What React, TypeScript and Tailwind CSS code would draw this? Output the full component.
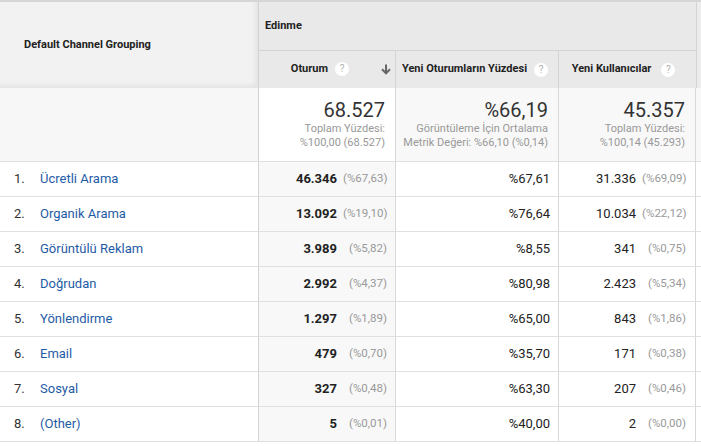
import React from "react";

type Row = {
  n: number;
  label: string;
  sessions: string;
  sessionsPct: string;
  newPct: string;
  users: string;
  usersPct: string;
};

const ROWS: Row[] = [
  { n: 1, label: "Ücretli Arama", sessions: "46.346", sessionsPct: "(%67,63)", newPct: "%67,61", users: "31.336", usersPct: "(%69,09)" },
  { n: 2, label: "Organik Arama", sessions: "13.092", sessionsPct: "(%19,10)", newPct: "%76,64", users: "10.034", usersPct: "(%22,12)" },
  { n: 3, label: "Görüntülü Reklam", sessions: "3.989", sessionsPct: "(%5,82)", newPct: "%8,55", users: "341", usersPct: "(%0,75)" },
  { n: 4, label: "Doğrudan", sessions: "2.992", sessionsPct: "(%4,37)", newPct: "%80,98", users: "2.423", usersPct: "(%5,34)" },
  { n: 5, label: "Yönlendirme", sessions: "1.297", sessionsPct: "(%1,89)", newPct: "%65,00", users: "843", usersPct: "(%1,86)" },
  { n: 6, label: "Email", sessions: "479", sessionsPct: "(%0,70)", newPct: "%35,70", users: "171", usersPct: "(%0,38)" },
  { n: 7, label: "Sosyal", sessions: "327", sessionsPct: "(%0,48)", newPct: "%63,30", users: "207", usersPct: "(%0,46)" },
  { n: 8, label: "(Other)", sessions: "5", sessionsPct: "(%0,01)", newPct: "%40,00", users: "2", usersPct: "(%0,00)" },
];

function HelpIcon() {
  return (
    <span className="inline-flex h-[14px] w-[14px] shrink-0 items-center justify-center rounded-full bg-white text-[10px] font-normal leading-none text-[#b0b0b0]">
      ?
    </span>
  );
}

function SortArrow() {
  return (
    <svg width="10" height="11" viewBox="0 0 10 11" className="shrink-0">
      <path d="M5 0.5v9" stroke="#666" strokeWidth="2" fill="none" />
      <path d="M1 5.3l4 4 4-4" stroke="#666" strokeWidth="2" fill="none" />
    </svg>
  );
}

export default function App() {
  return (
    <div className="h-[446px] w-[701px] overflow-hidden bg-white font-[Roboto,sans-serif]">
      <table className="w-[701px] table-fixed border-separate border-spacing-0">
        <colgroup>
          <col className="w-[259px]" />
          <col className="w-[137px]" />
          <col className="w-[163px]" />
          <col className="w-[137px]" />
          <col />
        </colgroup>
        <thead>
          <tr className="h-[51px]">
            <th
              rowSpan={2}
              className="border-r border-t-2 border-r-[#d2d2d2] border-t-[#d6d6d6] bg-[#f2f2f2] pl-[24px] text-left align-middle text-[11px] font-bold text-[#222] shadow-[inset_-4px_-4px_5px_-1px_rgba(0,0,0,0.06)]"
            >
              Default Channel Grouping
            </th>
            <th
              colSpan={3}
              className="border-b border-t-2 border-b-[#d4d4d4] border-t-[#d6d6d6] bg-[#e9e9e9] pl-[6px] text-left align-middle text-[11px] font-bold text-[#222]"
            >
              Edinme
            </th>
            <th rowSpan={2} className="border-l border-t-2 border-l-[#d4d4d4] border-t-[#d6d6d6] bg-[#ececec]" />
          </tr>
          <tr className="h-[37px]">
            <th className="border-r border-r-[#d4d4d4] bg-[#e9e9e9] align-middle">
              <div className="flex items-center justify-end pr-[4px] text-[11px] font-bold text-[#222]">
                <span>Oturum</span>
                <span className="ml-[7px]">
                  <HelpIcon />
                </span>
                <span className="ml-[32px]">
                  <SortArrow />
                </span>
              </div>
            </th>
            <th className="border-r border-r-[#d4d4d4] bg-[#e9e9e9] align-middle">
              <div className="flex items-center justify-center gap-[7px] pr-[4px] text-[11px] font-bold text-[#222]">
                <span>Yeni Oturumların Yüzdesi</span>
                <HelpIcon />
              </div>
            </th>
            <th className="bg-[#e9e9e9] align-middle">
              <div className="flex items-center justify-center gap-[10px] pr-[8px] text-[11px] font-bold text-[#222]">
                <span>Yeni Kullanıcılar</span>
                <HelpIcon />
              </div>
            </th>
          </tr>
        </thead>
        <tbody>
          <tr className="h-[74px]">
            <td className="border-b border-r border-b-[#e0e0e0] border-r-[#d2d2d2] bg-[#f7f7f7]" />
            <td className="border-b border-r border-b-[#e0e0e0] border-r-[#d8d8d8] bg-white pr-[10px] pt-[10px] text-right align-top">
              <div className="text-[20px] leading-[24px] text-[#333]">68.527</div>
              <div className="text-[11px] leading-[14px] text-[#999]">Toplam Yüzdesi:</div>
              <div className="text-[11px] leading-[14px] text-[#999]">%100,00 (68.527)</div>
            </td>
            <td className="border-b border-r border-b-[#e0e0e0] border-r-[#d8d8d8] bg-[#f8f8f8] pr-[10px] pt-[10px] text-right align-top">
              <div className="text-[20px] leading-[24px] text-[#333]">%66,19</div>
              <div className="whitespace-nowrap text-[11px] leading-[14px] text-[#999]">Görüntüleme İçin Ortalama</div>
              <div className="whitespace-nowrap text-[11px] leading-[14px] text-[#999]">Metrik Değeri: %66,10 (%0,14)</div>
            </td>
            <td className="border-b border-r border-b-[#e0e0e0] border-r-[#d8d8d8] bg-[#f8f8f8] pr-[10px] pt-[10px] text-right align-top">
              <div className="text-[20px] leading-[24px] text-[#333]">45.357</div>
              <div className="text-[11px] leading-[14px] text-[#999]">Toplam Yüzdesi:</div>
              <div className="text-[11px] leading-[14px] text-[#999]">%100,14 (45.293)</div>
            </td>
            <td className="border-b border-b-[#e0e0e0] bg-[#f8f8f8]" />
          </tr>
          {ROWS.map((r) => (
            <tr key={r.n} className="h-[35px]">
              <td className="border-b border-r border-b-[#e0e0e0] border-r-[#d2d2d2] align-middle text-[13px]">
                <div className="flex items-center">
                  <span className="w-[40px] pl-[14px] text-[#333]">{r.n}.</span>
                  <span className="text-[#1f5ca6]">{r.label}</span>
                </div>
              </td>
              <td className="border-b border-r border-b-[#e0e0e0] border-r-[#d8d8d8] bg-[#f8f8f8] pr-[8px] align-middle">
                <div className="flex items-center justify-end gap-[6px]">
                  <span className="text-[13px] font-bold text-[#222]">{r.sessions}</span>
                  <span className="w-[44px] text-right text-[11.5px] text-[#999]">{r.sessionsPct}</span>
                </div>
              </td>
              <td className="border-b border-r border-b-[#e0e0e0] border-r-[#d8d8d8] pr-[8px] text-right align-middle text-[13px] text-[#222]">
                {r.newPct}
              </td>
              <td className="border-b border-r border-b-[#e0e0e0] border-r-[#d8d8d8] pr-[9px] align-middle">
                <div className="flex items-center justify-end gap-[6px]">
                  <span className="text-[13px] text-[#222]">{r.users}</span>
                  <span className="w-[44px] text-right text-[11.5px] text-[#999]">{r.usersPct}</span>
                </div>
              </td>
              <td className="border-b border-b-[#e0e0e0]" />
            </tr>
          ))}
        </tbody>
      </table>
    </div>
  );
}
